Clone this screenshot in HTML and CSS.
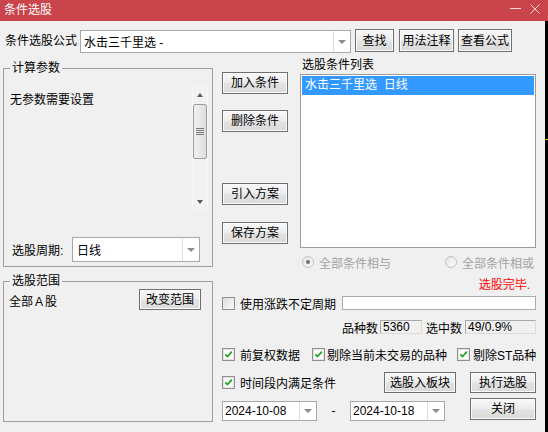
FILE: index.html
```html
<!DOCTYPE html>
<html>
<head>
<meta charset="utf-8">
<title>条件选股</title>
<link rel="stylesheet" href="styles.css">
</head>
<body>
<div class="window">
  <div class="titlebar">
    <span class="title">条件选股</span>
    <div class="caption-btns">
      <svg class="cap-min" width="11" height="10" viewBox="0 0 11 10"><path d="M0 4.5H11"/></svg>
      <svg class="cap-close" width="10" height="10" viewBox="0 0 10 10"><path d="M0.5 0.5L9.5 9.5M9.5 0.5L0.5 9.5"/></svg>
    </div>
  </div>
  <div class="below">
    <div class="dialog">
      <div class="formula-row">
        <span class="formula-label">条件选股公式</span>
        <div class="combo combo-formula"><span class="combo-text">水击三千里选 -</span><span class="combo-btn"><i class="arrow"></i></span></div>
        <button class="btn btn-find">查找</button>
        <button class="btn btn-usage">用法注释</button>
        <button class="btn btn-view">查看公式</button>
      </div>
      <div class="body-row">
        <div class="left-col">
          <fieldset class="group group-params">
            <legend>计算参数</legend>
            <div class="param-area">
              <span class="param-text">无参数需要设置</span>
              <div class="vscroll">
                <div class="sb-arrow"><i class="tri-up"></i></div>
                <div class="sb-thumb">
                  <svg width="8" height="7" viewBox="0 0 8 7"><path d="M0 0.5H8M0 2.5H8M0 4.5H8M0 6.5H8"/></svg>
                </div>
                <div class="sb-track"></div>
                <div class="sb-arrow"><i class="tri-down"></i></div>
              </div>
            </div>
            <div class="period-row">
              <span class="period-label">选股周期:</span>
              <div class="combo combo-period"><span class="combo-text">日线</span><span class="combo-btn"><i class="arrow"></i></span></div>
            </div>
          </fieldset>
          <fieldset class="group group-range">
            <legend>选股范围</legend>
            <div class="range-body">
              <span class="range-text">全部<span class="latin-a">A</span>股</span>
              <button class="btn btn-range">改变范围</button>
            </div>
          </fieldset>
        </div>
        <div class="right-col">
          <div class="upper">
            <div class="btn-col">
              <button class="btn btn-side btn-add">加入条件</button>
              <button class="btn btn-side btn-del">删除条件</button>
              <button class="btn btn-side btn-import">引入方案</button>
              <button class="btn btn-side btn-save">保存方案</button>
            </div>
            <div class="list-col">
              <div class="list-label">选股条件列表</div>
              <div class="listbox">
                <div class="list-item selected">水击三千里选&nbsp;&nbsp;日线</div>
              </div>
            </div>
          </div>
          <div class="radio-row">
            <span class="radio on"></span><span class="radio-label">全部条件相与</span>
            <span class="radio radio-or"></span><span class="radio-label">全部条件相或</span>
          </div>
          <div class="status-row">选股完毕.</div>
          <div class="cycle-row">
            <span class="cb"></span><span class="cb-label">使用涨跌不定周期</span>
            <span class="text-input"></span>
          </div>
          <div class="stats-row">
            <span class="stat-label">品种数</span><span class="field field-count">5360</span>
            <span class="stat-label stat-sel">选中数</span><span class="field field-sel">49/0.9%</span>
          </div>
          <div class="check-row">
            <span class="cb checked"><svg width="11" height="11" viewBox="0 0 11 11"><path d="M2.3 5.3L4.5 7.6L8.8 2.6"/></svg></span><span class="cb-label">前复权数据</span>
            <span class="cb checked cb-2"><svg width="11" height="11" viewBox="0 0 11 11"><path d="M2.3 5.3L4.5 7.6L8.8 2.6"/></svg></span><span class="cb-label lbl-2">剔除当前未交易的品种</span>
            <span class="cb checked cb-3"><svg width="11" height="11" viewBox="0 0 11 11"><path d="M2.3 5.3L4.5 7.6L8.8 2.6"/></svg></span><span class="cb-label lbl-3">剔除ST品种</span>
          </div>
          <div class="action-row">
            <span class="cb checked"><svg width="11" height="11" viewBox="0 0 11 11"><path d="M2.3 5.3L4.5 7.6L8.8 2.6"/></svg></span><span class="cb-label">时间段内满足条件</span>
            <button class="btn btn-block">选股入板块</button>
            <button class="btn btn-run">执行选股</button>
          </div>
          <div class="date-row">
            <div class="combo combo-date"><span class="combo-text">2024-10-08</span><span class="combo-btn"><i class="arrow"></i></span></div>
            <span class="date-sep">-</span>
            <div class="combo combo-date"><span class="combo-text">2024-10-18</span><span class="combo-btn"><i class="arrow"></i></span></div>
            <button class="btn btn-close">关闭</button>
          </div>
        </div>
      </div>
    </div>
    <div class="edge"><div class="edge-mark"></div></div>
  </div>
</div>
</body>
</html>
```
FILE: styles.css
```css
* { box-sizing: border-box; }
html, body { margin: 0; padding: 0; }
body {
  background: #000;
  font-family: "Liberation Sans", "Noto Sans CJK SC", sans-serif;
  font-size: 12px;
  color: #000;
}
.window { width: 548px; height: 432px; display: flex; flex-direction: column; overflow: hidden; }

/* title bar */
.titlebar {
  height: 21px; flex: none; background: #c9444b; color: #fff;
  display: flex; align-items: flex-start; padding: 0 8px 0 4px;
}
.title { line-height: 21px; }
.caption-btns { margin-left: auto; display: flex; gap: 9px; margin-top: 4px; }
.caption-btns svg { display: block; fill: none; stroke: #f5d8da; stroke-width: 1; }

.below { flex: 1; display: flex; }
.dialog { width: 545px; background: #f0f0f0; }
.edge { flex: 1; background: #000; }
.edge-mark { margin-top: 118px; height: 1px; background: #d6c600; }

/* combo boxes */
.combo { display: flex; background: #fff; border: 1px solid #a8a8a8; }
.combo-text { flex: 1; display: flex; align-items: center; white-space: nowrap; overflow: hidden; }
.combo-btn { width: 17px; border-left: 1px solid #dedede; display: flex; align-items: center; justify-content: center; }
.arrow { display: block; width: 0; height: 0; border-left: 4px solid transparent; border-right: 4px solid transparent; border-top: 4px solid #8c8c8c; }

/* buttons */
.btn {
  font: inherit; color: #000; margin: 0; padding: 0;
  border: 1px solid #707070;
  background: linear-gradient(#f8f8f8 0%, #ededed 45%, #e2e2e2 55%, #dadada 100%);
  box-shadow: inset 0 0 0 1px #fbfbfb;
  display: flex; align-items: center; justify-content: center;
  white-space: nowrap; line-height: 1;
}

/* formula row */
.formula-row { display: flex; align-items: flex-start; margin-top: 8px; padding-left: 5px; height: 24px; }
.formula-label { width: 75px; line-height: 24px; }
.combo-formula { width: 271px; height: 23px; margin-top: 1px; }
.combo-formula .combo-text { padding-left: 3px; }
.btn-find { width: 39px; height: 23px; margin-left: 4px; }
.btn-usage { width: 55px; height: 23px; margin-left: 5px; }
.btn-view { width: 54px; height: 23px; margin-left: 4px; }

.body-row { display: flex; align-items: flex-start; }

/* left column */
.left-col { margin-left: 3px; width: 210px; margin-top: 8px; }
.group { margin: 0; padding: 0; border: 1px solid #a0a0a0; min-width: 0; }
.group legend { margin-left: 6px; padding: 0 2px; line-height: 14px; height: 14px; }
.param-area { display: flex; align-items: flex-start; margin-top: 11px; height: 124px; }
.param-text { margin-left: 6px; margin-top: 6px; line-height: 16px; }
.vscroll {
  margin-left: auto; margin-right: 4px; width: 16px; height: 124px;
  display: flex; flex-direction: column;
  background: #f2f2f2; border-left: 1px solid #f8f8f8; border-right: 1px solid #f8f8f8;
}
.sb-arrow { height: 17px; flex: none; display: flex; align-items: center; justify-content: center; }
.tri-up { display: block; width: 0; height: 0; border-left: 3.5px solid transparent; border-right: 3.5px solid transparent; border-bottom: 4px solid #5a5a5a; }
.tri-down { display: block; width: 0; height: 0; border-left: 3.5px solid transparent; border-right: 3.5px solid transparent; border-top: 4px solid #5a5a5a; }
.sb-thumb {
  height: 55px; margin-top: 1px; flex: none;
  border: 1px solid #9c9c9c; border-radius: 2px;
  background: linear-gradient(to right, #f1f1f1, #dedede);
  display: flex; align-items: center; justify-content: center;
}
.sb-thumb svg { display: block; fill: none; stroke: #7a7a7a; stroke-width: 1; }
.sb-track { flex: 1; }
.period-row { display: flex; align-items: center; margin-top: 27px; height: 25px; padding-left: 8px; }
.period-label { width: 60px; }
.combo-period { width: 128px; height: 25px; }
.combo-period .combo-text { padding-left: 4px; }
.group-params { padding-bottom: 4px; }

.group-range { margin-top: 7px; }
.range-body { display: flex; align-items: flex-start; height: 133px; padding-left: 5px; }
.range-text { margin-top: 6px; line-height: 16px; }
.latin-a { margin: 0 2px; }
.btn-range { margin-left: auto; margin-right: 11px; margin-top: 1px; width: 62px; height: 21px; }

/* right column */
.right-col { margin-left: 9px; width: 314px; }
.upper { display: flex; height: 195px; }
.btn-col { width: 66px; display: flex; flex-direction: column; padding-top: 19px; }
.btn-side { width: 66px; height: 22px; flex: none; }
.btn-del { margin-top: 16px; }
.btn-import { margin-top: 51px; }
.btn-save { margin-top: 17px; }
.list-col { margin-left: 12px; width: 236px; }
.list-label { margin-top: 4px; line-height: 16px; padding-left: 2px; }
.listbox { margin-top: 1px; height: 174px; background: #fff; border: 1px solid #9c9c9c; padding: 1px; }
.list-item { height: 19px; line-height: 19px; padding-left: 3px; white-space: nowrap; }
.list-item.selected { background: #3399ff; color: #fff; }

.radio-row { display: flex; align-items: center; height: 28px; padding-left: 80px; }
.radio {
  width: 12px; height: 12px; flex: none; border-radius: 50%;
  border: 1px solid #c2c2c2; background: linear-gradient(135deg, #e6e6e6, #fafafa);
  display: flex; align-items: center; justify-content: center;
}
.radio.on::after { content: ""; width: 4px; height: 4px; border-radius: 50%; background: #707070; }
.radio-label { margin-left: 5px; color: #a3a3a3; }
.radio-or { margin-left: 54px; }

.status-row { height: 18px; line-height: 18px; text-align: right; padding-right: 6px; color: #ff0000; }

.cycle-row { display: flex; align-items: center; height: 18px; }
.cb {
  width: 13px; height: 13px; flex: none;
  border: 1px solid #8f8f8f;
  background: linear-gradient(135deg, #dcdcdc, #fbfbfb);
  display: flex; align-items: center; justify-content: center;
}
.cb.checked { background: #fdfdfd; box-shadow: inset 0 0 0 1px #e4e4e4; }
.cb svg { display: block; fill: none; stroke: #21a121; stroke-width: 1.7; }
.cb-label { margin-left: 5px; white-space: nowrap; }
.text-input { margin-left: auto; width: 194px; height: 14px; background: #fff; border: 1px solid #ababab; }

.stats-row { display: flex; align-items: center; margin-top: 8px; height: 14px; padding-left: 120px; }
.stat-label { width: 36px; white-space: nowrap; }
.stat-sel { margin-left: 4px; }
.field {
  height: 14px; line-height: 12px; padding-left: 2px;
  border: 1px solid #a8a8a8; border-right-color: #dcdcdc; border-bottom-color: #dcdcdc;
  background: #f0f0f0; white-space: nowrap;
}
.field-count { margin-left: 2px; width: 42px; }
.field-sel { margin-left: 3px; width: 71px; }

.check-row { display: flex; align-items: center; margin-top: 11px; height: 18px; }
.cb-2 { margin-left: 12px; }
.lbl-2 { margin-left: 2px; }
.cb-3 { margin-left: 10px; }
.lbl-3 { margin-left: 3px; }

.action-row { display: flex; align-items: center; margin-top: 9px; height: 21px; }
.btn-block { margin-left: auto; width: 72px; height: 21px; }
.btn-run { margin-left: 14px; width: 66px; height: 21px; }

.date-row { display: flex; align-items: flex-start; margin-top: 5px; height: 22px; }
.combo-date { width: 95px; height: 20px; margin-top: 3px; }
.combo-date .combo-text { padding-left: 2px; }
.combo-date .combo-btn { width: 17px; }
.date-sep { width: 33px; text-align: center; margin-top: 3px; line-height: 20px; }
.btn-close { margin-left: auto; width: 66px; height: 22px; }
```
